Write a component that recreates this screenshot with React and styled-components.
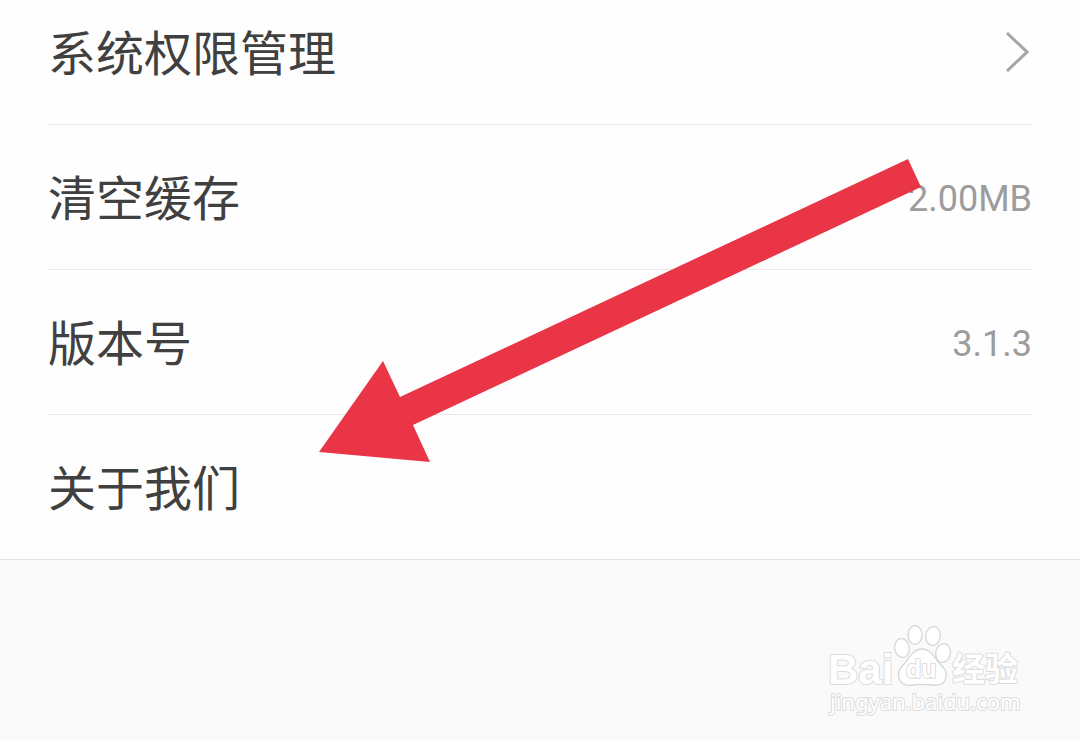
import React from 'react';
import styled, { createGlobalStyle } from 'styled-components';

const GlobalStyle = createGlobalStyle`
  * {
    box-sizing: border-box;
  }
  body {
    margin: 0;
    background: #fafafa;
    color: #404040;
    font-family: Roboto, 'Noto Sans CJK SC', sans-serif;
  }
`;

const Page = styled.main`
  position: relative;
`;

const List = styled.ul`
  margin: 0;
  padding: 0 47px 0 48px;
  list-style: none;
  background: #fefefe;
  border-bottom: 1px solid #e4e4e4;
`;

const Item = styled.li`
  border-bottom: 1px solid #e8e8e8;
  &:last-child {
    border-bottom: none;
  }
`;

const Row = styled.div`
  display: flex;
  align-items: center;
  justify-content: space-between;
  width: 100%;
  padding: ${({ $first }) => ($first ? '22px' : '42px')} 0 38px;
  border: none;
  background: none;
  color: inherit;
  font-family: inherit;
  text-align: left;
`;

const Label = styled.span`
  padding-bottom: 8px;
  font-family: 'Noto Sans CJK SC', sans-serif;
  font-size: 48px;
  line-height: 56px;
`;

const Value = styled.span`
  padding-right: 1px;
  color: #9c9c9c;
  font-size: 36px;
  line-height: 64px;
`;

const Chevron = styled.svg`
  width: 24px;
  height: 42px;
  margin: 0 4px 4px 0;
  fill: none;
  stroke: #a4a4a4;
  stroke-width: 3;
`;

const Arrow = styled.svg`
  position: absolute;
  top: 159px;
  left: 319px;
  width: 602px;
  height: 303px;
  fill: #ea3547;
  pointer-events: none;
`;

const Footer = styled.footer`
  display: flex;
  justify-content: flex-end;
  padding: 60px 54px 20px;
`;

const Logo = styled.svg`
  width: 200px;
  height: 100px;
  fill: #fff;
  stroke: #dcdcdc;
  stroke-width: 2;
  stroke-linejoin: round;
`;

const LogoText = styled.text`
  font-family: 'Liberation Sans', sans-serif;
  font-size: ${({ $size }) => $size}px;
  font-weight: 700;
  paint-order: stroke;
`;

const LogoChinese = styled(LogoText)`
  font-family: 'Noto Sans CJK SC', sans-serif;
`;

const Domain = styled(LogoText)`
  font-family: 'Noto Sans', sans-serif;
  font-weight: 400;
`;

const items = [
  { label: '系统权限管理', link: true, chevron: true },
  { label: '清空缓存', value: '2.00MB', link: true },
  { label: '版本号', value: '3.1.3' },
  { label: '关于我们', link: true },
];

const BaiduLogo = () => (
  <Logo viewBox='0 0 200 100' role='img' aria-label='Baidu 经验'>
    <LogoText x='2' y='64' $size={42}>
      Bai
    </LogoText>
    <g strokeWidth='1.3' stroke='#d6d6d6'>
      <ellipse cx='76' cy='28' rx='7.3' ry='9.5' transform='rotate(-10 76 28)' />
      <ellipse cx='89' cy='15' rx='7' ry='9.5' />
      <ellipse cx='107' cy='16' rx='7.3' ry='9.5' transform='rotate(8 107 16)' />
      <ellipse cx='117' cy='33' rx='7.3' ry='9.5' transform='rotate(10 117 33)' />
      <path d='M96 29C87 29 84 37 79 43C75 47 71 51 73 58C75 65 81 66 87 65C94 64 99 64 106 65C113 66 119 64 120 57C121 50 117 47 113 43C108 37 105 29 96 29Z' />
    </g>
    <LogoText x='80' y='58' $size={25}>
      du
    </LogoText>
    <LogoChinese x='126' y='61' $size={33}>
      经验
    </LogoChinese>
    <Domain x='4' y='90' $size={22}>
      jingyan.baidu.com
    </Domain>
  </Logo>
);

const App = () => {
  return (
    <>
      <GlobalStyle />
      <Page>
        <List>
          {items.map(({ label, value, link, chevron }, index) => (
            <Item key={label}>
              <Row as={link ? 'button' : 'div'} $first={index === 0}>
                <Label>{label}</Label>
                {value && <Value>{value}</Value>}
                {chevron && (
                  <Chevron viewBox='0 0 24 42'>
                    <path d='M2 2L22 21L2 40' />
                  </Chevron>
                )}
              </Row>
            </Item>
          ))}
        </List>
        <Arrow viewBox='0 0 602 303'>
          <path d='M0 293L64 202L81 238L589 0L602 28L94 266L111 303Z' />
        </Arrow>
      </Page>
      <Footer>
        <BaiduLogo />
      </Footer>
    </>
  );
};

export default App;
